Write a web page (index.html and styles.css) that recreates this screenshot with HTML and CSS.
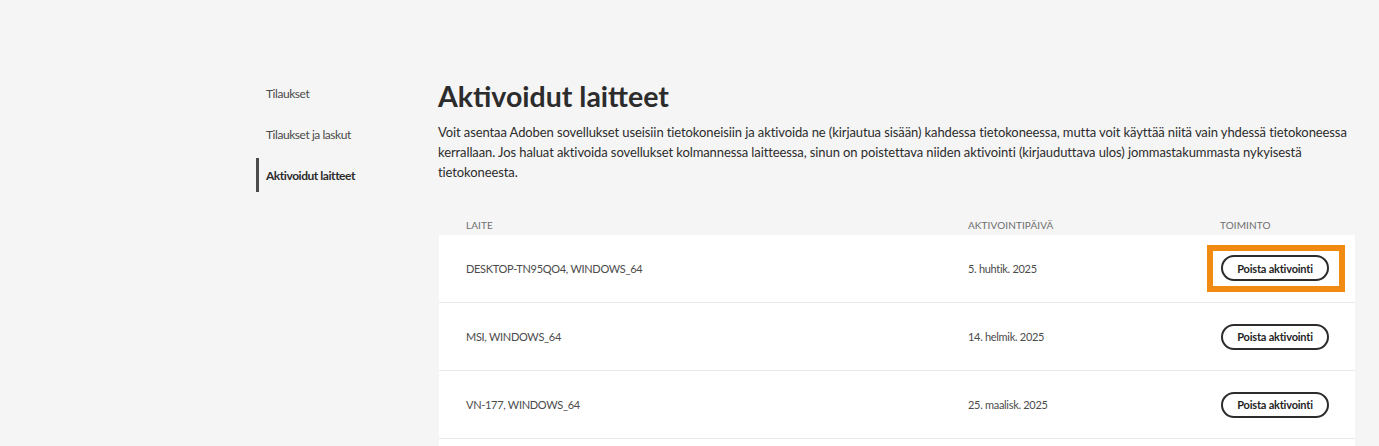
FILE: index.html
```html
<!DOCTYPE html>
<html lang="fi">
<head>
<meta charset="utf-8">
<title>Aktivoidut laitteet</title>
<link rel="stylesheet" href="styles.css">
</head>
<body>
<div class="page">
  <nav class="sidebar">
    <a class="nav-item">Tilaukset</a>
    <a class="nav-item">Tilaukset ja laskut</a>
    <a class="nav-item active">Aktivoidut laitteet</a>
  </nav>
  <main class="main">
    <h1 class="title">Aktivoidut laitteet</h1>
    <p class="intro">Voit asentaa Adoben sovellukset useisiin tietokoneisiin ja aktivoida ne (kirjautua sisään) kahdessa tietokoneessa, mutta voit käyttää niitä vain yhdessä tietokoneessa kerrallaan. Jos haluat aktivoida sovellukset kolmannessa laitteessa, sinun on poistettava niiden aktivointi (kirjauduttava ulos) jommastakummasta nykyisestä tietokoneesta.</p>
    <div class="table">
      <div class="thead">
        <span>Laite</span>
        <span>Aktivointipäivä</span>
        <span>Toiminto</span>
      </div>
      <div class="card">
        <div class="row">
          <span class="cell">DESKTOP-TN95QO4, WINDOWS_64</span>
          <span class="cell">5. huhtik. 2025</span>
          <span class="cell action"><span class="highlight"><button class="btn">Poista aktivointi</button></span></span>
        </div>
        <div class="row">
          <span class="cell">MSI, WINDOWS_64</span>
          <span class="cell">14. helmik. 2025</span>
          <span class="cell action"><button class="btn">Poista aktivointi</button></span>
        </div>
        <div class="row">
          <span class="cell">VN-177, WINDOWS_64</span>
          <span class="cell">25. maalisk. 2025</span>
          <span class="cell action"><button class="btn">Poista aktivointi</button></span>
        </div>
        <div class="row"></div>
      </div>
    </div>
  </main>
</div>
</body>
</html>
```
FILE: styles.css
```css
html, body {
  margin: 0;
  padding: 0;
  background: #f5f5f5;
  font-family: Lato, "Open Sans", sans-serif;
  color: #2c2c2c;
  overflow: hidden;
}

.page {
  display: flex;
  padding: 76px 0 0 256px;
  height: 370px;
}

.sidebar {
  width: 182px;
  flex: none;
  display: flex;
  flex-direction: column;
  gap: 7px;
}

.nav-item {
  display: flex;
  align-items: center;
  height: 34px;
  padding-left: 7px;
  border-left: 3px solid transparent;
  font-size: 12px;
  letter-spacing: -0.45px;
  color: #4b4b4b;
}

.nav-item.active {
  border-left-color: #4b4b4b;
  font-weight: 700;
  color: #2c2c2c;
}

.main {
  width: 917px;
  flex: none;
}

.title {
  margin: 2px 0 0;
  font-size: 28.5px;
  line-height: 36px;
  font-weight: 700;
  color: #2c2c2c;
}

.intro {
  margin: 8px 0 0;
  font-size: 13px;
  line-height: 20px;
  letter-spacing: -0.1px;
  color: #2c2c2c;
}

.table {
  margin-top: 37px;
}

.thead,
.row {
  display: grid;
  grid-template-columns: 502px 252px 1fr;
  padding: 0 27px;
  align-items: center;
}

.thead {
  height: 16px;
  padding-left: 28px;
  font-size: 10px;
  letter-spacing: 0.1px;
  text-transform: uppercase;
  color: #6e6e6e;
  align-items: start;
}

.card {
  background: #fff;
  margin-left: 1px;
  width: 916px;
}

.card .row {
  height: 67px;
  border-bottom: 1px solid #eaeaea;
  font-size: 11px;
  letter-spacing: -0.3px;
  color: #4b4b4b;
}

.action {
  display: flex;
  align-items: center;
}

.btn {
  box-sizing: border-box;
  width: 108px;
  height: 26px;
  border: 2px solid #2c2c2c;
  border-radius: 13px;
  background: #fff;
  font-family: inherit;
  font-size: 11px;
  letter-spacing: -0.2px;
  font-weight: 700;
  color: #1f1f1f;
  padding: 0;
  margin-left: 1px;
}

.highlight {
  display: inline-flex;
  margin: 0 0 0 -13px;
  padding: 4px 10px 5px 7px;
  border: 6px solid #f08a10;
  background: #fff;
}
```
